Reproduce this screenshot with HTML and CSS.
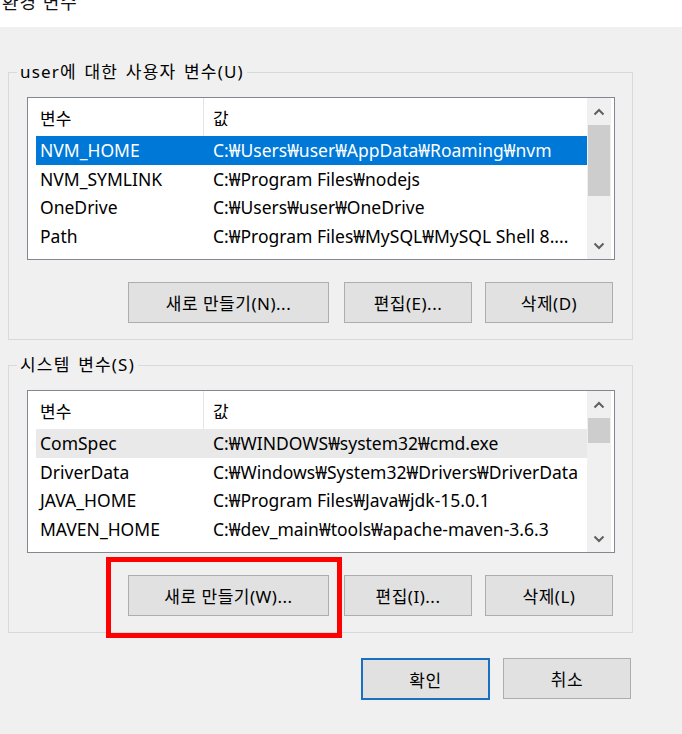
FILE: index.html
```html
<!DOCTYPE html>
<html lang="ko">
<head>
<meta charset="utf-8">
<title>환경 변수</title>
<link rel="stylesheet" href="styles.css">
</head>
<body>
<div class="titlebar"><span class="title">환경 변수</span></div>
<div class="dialog">
  <fieldset class="group">
    <legend>user에 대한 사용자 변수(U)</legend>
    <div class="listbox">
      <div class="list">
        <div class="row head"><span class="c1">변수</span><span class="c2">값</span></div>
        <div class="row sel"><span class="c1">NVM_HOME</span><span class="c2">C:₩Users₩user₩AppData₩Roaming₩nvm</span></div>
        <div class="row"><span class="c1">NVM_SYMLINK</span><span class="c2">C:₩Program Files₩nodejs</span></div>
        <div class="row"><span class="c1">OneDrive</span><span class="c2">C:₩Users₩user₩OneDrive</span></div>
        <div class="row"><span class="c1">Path</span><span class="c2">C:₩Program Files₩MySQL₩MySQL Shell 8....</span></div>
      </div>
      <div class="scroll">
        <div class="arrow"><svg width="12" height="8" viewBox="0 0 12 8"><polyline points="1.5,6.5 6,2 10.5,6.5" fill="none" stroke="#5f5f5f" stroke-width="2"/></svg></div>
        <div class="track"><div class="thumb thumb-user"></div></div>
        <div class="arrow"><svg width="12" height="8" viewBox="0 0 12 8"><polyline points="1.5,1.5 6,6 10.5,1.5" fill="none" stroke="#5f5f5f" stroke-width="2"/></svg></div>
      </div>
    </div>
    <div class="btns">
      <button class="btn wide">새로 만들기(N)...</button>
      <button class="btn edit">편집(E)...</button>
      <button class="btn">삭제(D)</button>
    </div>
  </fieldset>

  <fieldset class="group second">
    <legend>시스템 변수(S)</legend>
    <div class="listbox">
      <div class="list">
        <div class="row head"><span class="c1">변수</span><span class="c2">값</span></div>
        <div class="row hover"><span class="c1">ComSpec</span><span class="c2">C:₩WINDOWS₩system32₩cmd.exe</span></div>
        <div class="row"><span class="c1">DriverData</span><span class="c2">C:₩Windows₩System32₩Drivers₩DriverData</span></div>
        <div class="row"><span class="c1">JAVA_HOME</span><span class="c2">C:₩Program Files₩Java₩jdk-15.0.1</span></div>
        <div class="row"><span class="c1">MAVEN_HOME</span><span class="c2">C:₩dev_main₩tools₩apache-maven-3.6.3</span></div>
      </div>
      <div class="scroll">
        <div class="arrow"><svg width="12" height="8" viewBox="0 0 12 8"><polyline points="1.5,6.5 6,2 10.5,6.5" fill="none" stroke="#5f5f5f" stroke-width="2"/></svg></div>
        <div class="track"><div class="thumb thumb-sys"></div></div>
        <div class="arrow"><svg width="12" height="8" viewBox="0 0 12 8"><polyline points="1.5,1.5 6,6 10.5,1.5" fill="none" stroke="#5f5f5f" stroke-width="2"/></svg></div>
      </div>
    </div>
    <div class="btns">
      <button class="btn wide marked">새로 만들기(W)...<span class="mark"></span></button>
      <button class="btn edit">편집(I)...</button>
      <button class="btn">삭제(L)</button>
    </div>
  </fieldset>

  <div class="footer">
    <button class="btn ok">확인</button>
    <button class="btn">취소</button>
  </div>
</div>
</body>
</html>
```

FILE: styles.css
```css
html, body {
  margin: 0;
  padding: 0;
  background: #f0f0f0;
  font-family: "Noto Sans", "Noto Sans CJK KR", sans-serif;
  font-size: 17px;
  color: #000;
}

.titlebar {
  height: 27px;
  background: #fff;
  overflow: hidden;
  padding-left: 2px;
}

.title {
  display: block;
  margin-top: -10px;
  line-height: 24px;
  font-size: 18px;
  color: #111;
  letter-spacing: 1px;
}

.dialog {
  padding: 34px 0 0 8px;
}

.group {
  box-sizing: border-box;
  width: 625px;
  margin: 0;
  padding: 14px 17px 16px 18px;
  border: 1px solid #d9d9d9;
  min-width: 0;
}

.group.second {
  margin-top: 14px;
}

.group legend {
  padding: 0 3px;
  margin-left: -10px;
  line-height: 22px;
  font-size: 17px;
  letter-spacing: 1.2px;
  word-spacing: 2px;
}

.listbox {
  box-sizing: border-box;
  height: 163px;
  border: 1px solid #828790;
  background: #fff;
  display: flex;
}

.list {
  flex: 1;
  padding-left: 8px;
  overflow: hidden;
  font-size: 17.5px;
}

.row {
  display: flex;
  height: 28.6px;
  align-items: center;
  white-space: nowrap;
}

.row.head {
  height: 38px;
  font-size: 17px;
}

.c1 {
  box-sizing: border-box;
  width: 167px;
  padding-left: 4px;
  flex: none;
}

.c2 {
  padding-left: 10px;
  flex: 1;
  overflow: hidden;
}

.head .c2 {
  border-left: 1px solid #e5e5e5;
  padding-left: 9px;
  align-self: stretch;
  display: flex;
  align-items: center;
}

.head .c1 {
  align-self: stretch;
  display: flex;
  align-items: center;
}

.row.sel {
  background: #0078d7;
  color: #fff;
}

.row.hover {
  background: #e9e9e9;
}

.scroll {
  width: 24px;
  margin: 0 3px 0 0;
  background: #f0f0f0;
  display: flex;
  flex-direction: column;
}

.arrow {
  height: 27px;
  display: flex;
  align-items: center;
  justify-content: center;
  flex: none;
}

.track {
  flex: 1;
}

.thumb {
  margin: 0 1px;
  background: #cdcdcd;
}

.thumb-user {
  height: 71px;
}

.thumb-sys {
  height: 25px;
}

.btns {
  display: flex;
  justify-content: flex-end;
  margin: 22px 2px 0 0;
}

.btn {
  box-sizing: border-box;
  width: 128px;
  height: 41px;
  background: #e1e1e1;
  border: 1px solid #adadad;
  font-family: "Noto Sans", "Noto Sans CJK KR", sans-serif;
  font-size: 17px;
  letter-spacing: 0.5px;
  color: #000;
  padding: 0;
  margin: 0 0 0 13px;
}

.btn.wide {
  width: 201px;
  margin-left: 0;
}

.btn.edit {
  margin-left: 15px;
}

.marked {
  position: relative;
}

.mark {
  position: absolute;
  left: -23px;
  top: -19px;
  width: 236px;
  height: 81px;
  box-sizing: border-box;
  border: 5px solid #ff0000;
}

.footer {
  display: flex;
  justify-content: flex-end;
  padding-right: 51px;
  margin-top: 25px;
}

.btn.ok {
  width: 129px;
  height: 42px;
  border: 2px solid #1b6fc0;
  margin-left: 0;
}
```
